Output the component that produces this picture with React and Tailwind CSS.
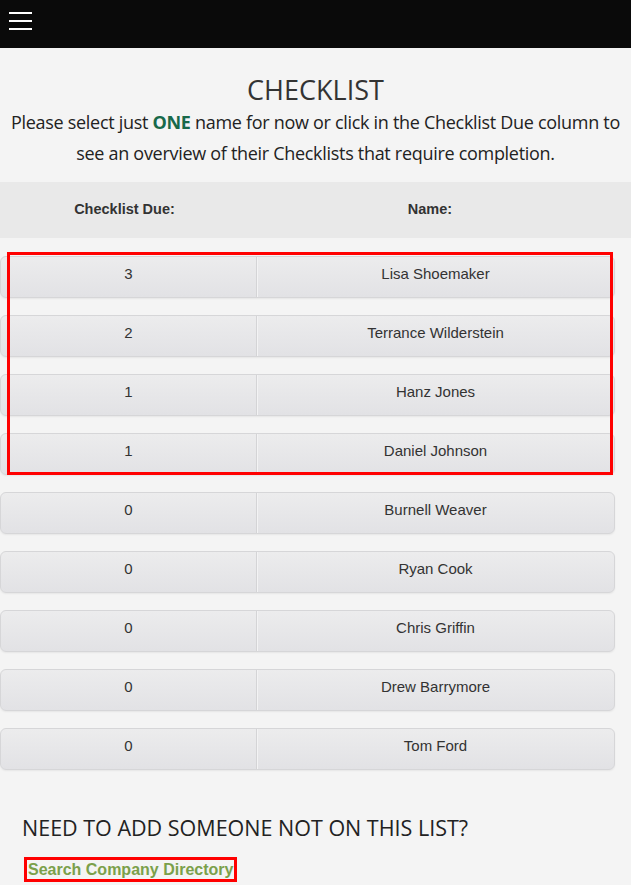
const PEOPLE = [
  { due: 3, name: 'Lisa Shoemaker' },
  { due: 2, name: 'Terrance Wilderstein' },
  { due: 1, name: 'Hanz Jones' },
  { due: 1, name: 'Daniel Johnson' },
  { due: 0, name: 'Burnell Weaver' },
  { due: 0, name: 'Ryan Cook' },
  { due: 0, name: 'Chris Griffin' },
  { due: 0, name: 'Drew Barrymore' },
  { due: 0, name: 'Tom Ford' },
]

const HEAD_FONT = { fontFamily: "'Open Sans', 'DejaVu Sans', sans-serif" }
const ROW_FONT = { fontFamily: "'Liberation Sans', Arial, sans-serif" }

function Row({ due, name }) {
  return (
    <div
      className="flex h-[42px] w-[615px] rounded-[6px] border border-[#d6d6d8] bg-gradient-to-b from-[#ececed] to-[#e2e2e5] text-[15px] text-[#333] shadow-[0_1px_2px_rgba(0,0,0,0.06)]"
      style={ROW_FONT}
    >
      <div className="flex w-[255px] items-center justify-center pb-[5px]">{due}</div>
      <div className="w-px bg-[#d4d4d6] shadow-[1px_0_0_#f3f3f4]" />
      <div className="flex flex-1 items-center justify-center pb-[5px]">{name}</div>
    </div>
  )
}

export default function App() {
  const flagged = PEOPLE.slice(0, 4)
  const rest = PEOPLE.slice(4)

  return (
    <div className="min-h-[885px] w-[631px] bg-[#f4f4f4]">
      {/* ── Top bar ── */}
      <div className="flex h-[48px] items-start bg-[#0a0a0a] pl-[9px] pt-[12px]">
        <button className="flex flex-col gap-[6px] border-0 bg-transparent p-0">
          <span className="block h-[2px] w-[23px] bg-white" />
          <span className="block h-[2px] w-[23px] bg-white" />
          <span className="block h-[2px] w-[23px] bg-white" />
        </button>
      </div>

      {/* ── Title ── */}
      <div className="pt-[25px] text-center text-[#222]" style={HEAD_FONT}>
        <h1 className="text-[27px] leading-[34px] text-[#333]">CHECKLIST</h1>
        <p className="text-[18px] leading-[31px] tracking-[-0.3px]">
          Please select just <b className="font-bold text-[#18694a]">ONE</b> name for now or click in the Checklist Due column to see an overview of their Checklists that require completion.
        </p>
      </div>

      {/* ── Table header ── */}
      <div className="mt-[13px] flex h-[56px] items-center bg-[#e9e9e9] text-[14.5px] font-bold text-[#333]" style={ROW_FONT}>
        <div className="w-[249px] text-center">Checklist Due:</div>
        <div className="w-[362px] text-center">Name:</div>
      </div>

      {/* ── Rows ── */}
      <div className="mt-[18px] flex flex-col gap-[17px]">
        <div className="relative flex flex-col gap-[17px]">
          {flagged.map((p) => (
            <Row key={p.name} {...p} />
          ))}
          <div className="pointer-events-none absolute left-[7px] top-[-4px] h-[223px] w-[606px] border-[3px] border-[#ff0000]" />
        </div>
        {rest.map((p) => (
          <Row key={p.name} {...p} />
        ))}
      </div>

      {/* ── Add someone ── */}
      <div className="px-[22px] pt-[44px]">
        <h2 className="text-[21.5px] leading-[28px] text-[#222]" style={HEAD_FONT}>
          NEED TO ADD SOMEONE NOT ON THIS LIST?
        </h2>
        <a
          href="#"
          className="mt-[15px] ml-[2px] inline-block border-[3px] border-[#ff0000] px-[1px] text-[16px] font-bold leading-[19px] text-[#7ba04a]"
          style={ROW_FONT}
        >
          Search Company Directory
        </a>
      </div>
    </div>
  )
}
